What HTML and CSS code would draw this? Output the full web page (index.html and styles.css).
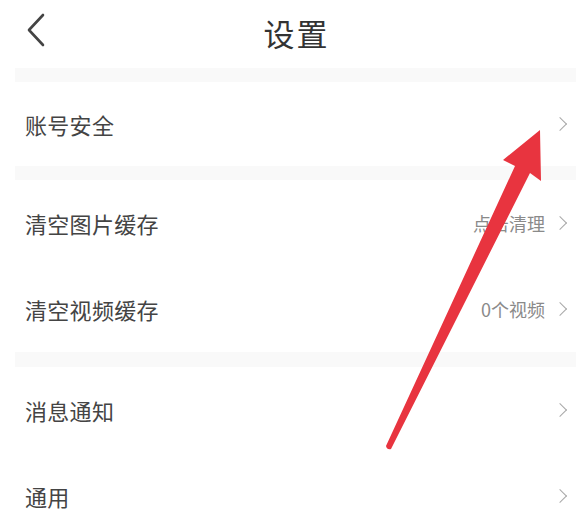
FILE: index.html
```html
<!DOCTYPE html>
<html lang="zh">
<head>
<meta charset="utf-8">
<link rel="stylesheet" href="styles.css">
</head>
<body>
<div class="page">
  <header class="topbar">
    <svg class="back" width="20" height="34" viewBox="0 0 20 34"><path d="M17 2 L3 17 L17 32" fill="none" stroke="#444" stroke-width="2.6" stroke-linecap="round" stroke-linejoin="round"/></svg>
    <h1 class="title">设置</h1>
  </header>
  <div class="band"></div>
  <div class="row row-first"><span class="label">账号安全</span><span class="right"><span class="chev"></span></span></div>
  <div class="band"></div>
  <div class="row"><span class="label">清空图片缓存</span><span class="right"><span class="value">点击清理</span><span class="chev"></span></span></div>
  <div class="row"><span class="label">清空视频缓存</span><span class="right"><span class="value">0个视频</span><span class="chev"></span></span></div>
  <div class="band band-3"></div>
  <div class="row"><span class="label">消息通知</span><span class="right"><span class="chev"></span></span></div>
  <div class="row"><span class="label">通用</span><span class="right"><span class="chev"></span></span></div>
  <svg class="arrow" width="583" height="509" viewBox="0 0 583 509">
    <path d="M386 446 Q387 450 391 449 L530 173 L541 181 L540 130 L503 160 L515 166 Z" fill="#e8343f"/>
  </svg>
</div>
</body>
</html>
```
FILE: styles.css
```css
html, body {
  margin: 0;
  padding: 0;
  background: #fff;
}
.page {
  position: relative;
  width: 583px;
  height: 509px;
  overflow: hidden;
  font-family: "Noto Sans CJK SC", "Noto Sans", sans-serif;
  color: #3c3c3c;
}
.topbar {
  position: relative;
  height: 68px;
  display: flex;
  align-items: center;
  justify-content: center;
}
.back {
  position: absolute;
  left: 26px;
  top: 13px;
}
.title {
  margin: 0 0 4px 10px;
  font-size: 31px;
  font-weight: 400;
  color: #333;
  letter-spacing: 2px;
}
.band {
  height: 14px;
  margin: 0 7px 0 15px;
  background: #f9f9f9;
}
.band-3 {
  height: 15px;
}
.row {
  height: 86px;
  display: flex;
  align-items: center;
  justify-content: space-between;
  padding: 0 14px 0 25px;
  box-sizing: border-box;
}
.row-first {
  height: 84px;
}
.label {
  font-size: 22px;
  letter-spacing: 0.3px;
  color: #444;
}
.right {
  display: flex;
  align-items: center;
  gap: 10px;
}
.value {
  font-size: 18px;
  color: #8a8a8a;
}
.chev {
  width: 9px;
  height: 9px;
  border-top: 1.6px solid #a8a8a8;
  border-right: 1.6px solid #a8a8a8;
  transform: rotate(45deg);
  margin-right: 4px;
}
.arrow {
  position: absolute;
  left: 0;
  top: 0;
}
```
